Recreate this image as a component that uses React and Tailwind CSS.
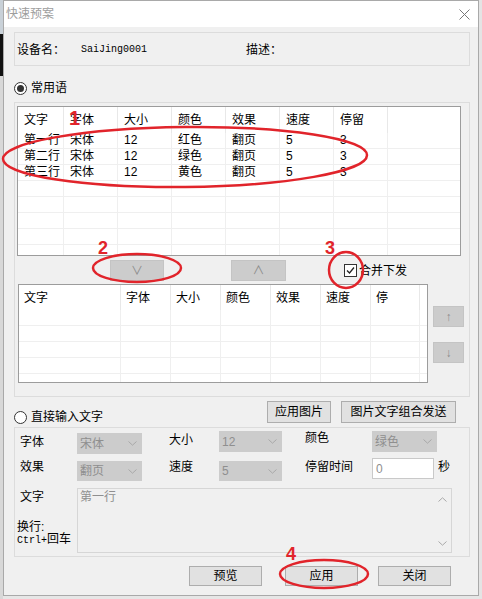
import React from 'react';

const SANS = "font-['Liberation_Sans','Noto_Sans_CJK_SC',sans-serif]";

const COLS1 = ['w-[46px]', 'w-[54px]', 'w-[54px]', 'w-[54px]', 'w-[54px]', 'w-[54px]', 'w-[54px]'];
const COLS2 = ['w-[102px]', 'w-[50px]', 'w-[50px]', 'w-[50px]', 'w-[50px]', 'w-[50px]', 'w-[49px]'];
const HEAD1 = ['文字', '字体', '大小', '颜色', '效果', '速度', '停留'];
const HEAD2 = ['文字', '字体', '大小', '颜色', '效果', '速度', '停'];
const ROWS1 = [
  ['第一行', '宋体', '12', '红色', '翻页', '5', '3'],
  ['第二行', '宋体', '12', '绿色', '翻页', '5', '3'],
  ['第三行', '宋体', '12', '黄色', '翻页', '5', '3'],
];

function ListView({ cols, head, rows, rowCount, headH, pad, className }) {
  return (
    <div className={`border border-[#9c9c9c] bg-white overflow-hidden text-[12px] text-black ${className}`}>
      <div className={`flex ${headH}`}>
        {cols.map((w, i) => (
          <div key={i} className={`${w} ${pad} shrink-0 flex items-center border-r border-[#e8e8e8]`}>
            {head[i]}
          </div>
        ))}
      </div>
      {Array.from({ length: rowCount }).map((_, r) => (
        <div key={r} className="flex h-[16px] shrink-0 border-b border-[#efefef]">
          {cols.map((w, i) => (
            <div key={i} className={`${w} ${pad} shrink-0 leading-[15px] border-r border-[#efefef]`}>
              {rows[r] ? rows[r][i] : ''}
            </div>
          ))}
          <div className="flex-1" />
        </div>
      ))}
    </div>
  );
}

function Radio({ checked }) {
  return (
    <span className="w-[13px] h-[13px] rounded-full border border-[#333] bg-white flex items-center justify-center shrink-0">
      {checked && <span className="w-[7px] h-[7px] rounded-full bg-[#333]" />}
    </span>
  );
}

function Btn({ children, className }) {
  return (
    <div className={`flex items-center justify-center bg-[#e1e1e1] border border-[#adadad] text-[12px] leading-none text-black shrink-0 ${className}`}>
      {children}
    </div>
  );
}

function GrayBtn({ children, className }) {
  return (
    <div className={`flex items-center justify-center bg-[#cccccc] border border-[#c4c4c4] text-[12px] leading-none text-[#8a8a8a] shrink-0 ${className}`}>
      {children}
    </div>
  );
}

function Chevron({ up }) {
  return (
    <svg width="9" height="5" viewBox="0 0 9 5">
      <path d={up ? 'M0.5 4.5 L4.5 0.8 L8.5 4.5' : 'M0.5 0.5 L4.5 4.2 L8.5 0.5'} fill="none" stroke="#a9a9a9" strokeWidth="1" />
    </svg>
  );
}

function Combo({ value, className }) {
  return (
    <div className={`flex items-center justify-between bg-[#cccccc] pl-[3px] pr-[5px] text-[12px] text-[#8f8f8f] shrink-0 ${className}`}>
      <span className="leading-[14px]">{value}</span>
      <Chevron />
    </div>
  );
}

export default function App() {
  return (
    <div className={`relative w-[482px] h-[599px] bg-[#e6e6e6] flex overflow-hidden ${SANS}`}>
      {/* background window edge */}
      <div className="w-[3px] flex flex-col shrink-0">
        <div className="h-[34px] bg-[#c9d1d8]" />
        <div className="h-[42px] bg-[#111]" />
        <div className="flex-1 bg-[#d8d8d8]" />
      </div>

      {/* dialog */}
      <div className="w-[476px] h-[596px] border border-[#a9a9a9] flex flex-col shrink-0">
        <div className="h-[26px] bg-white flex items-center justify-between pl-[2px] pr-[8px]">
          <span className="text-[12px] text-[#9d9d9d] leading-none">快速预案</span>
          <svg width="11" height="11" viewBox="0 0 11 11">
            <path d="M0.5 0.5 L10.5 10.5 M10.5 0.5 L0.5 10.5" stroke="#777" strokeWidth="1" />
          </svg>
        </div>

        <div className="flex-1 bg-[#f0f0f0] pl-[10px] flex flex-col text-[12px] text-black">
          {/* device */}
          <div className="mt-[5px] w-[456px] h-[34px] border border-[#dcdcdc] flex items-center pl-[2px] pt-[2px] leading-[14px]">
            <span className="w-[64px]">设备名：</span>
            <span className="w-[165px] font-['Liberation_Mono',monospace] text-[10px]">SaiJing0001</span>
            <span>描述：</span>
          </div>

          <div className="mt-[15px] h-[14px] flex items-center gap-[4px]">
            <Radio checked />
            <span className="leading-[14px]">常用语</span>
          </div>

          {/* common phrases group */}
          <div className="mt-[7px] w-[456px] h-[295px] border border-[#dcdcdc] flex flex-col pt-[3px] pl-[2px]">
            <ListView
              cols={COLS1}
              head={HEAD1}
              rows={ROWS1}
              rowCount={8}
              headH="h-[26px]"
              pad="pl-[6px]"
              className="w-[444px] h-[150px] shrink-0"
            />
            <div className="mt-[4px] h-[21px] flex items-center">
              <GrayBtn className="ml-[93px] w-[54px] h-[21px]">∨</GrayBtn>
              <GrayBtn className="ml-[67px] w-[55px] h-[21px]">∧</GrayBtn>
              <span className="ml-[58px] w-[13px] h-[13px] border border-[#333] bg-white flex items-center justify-center">
                <svg width="9" height="9" viewBox="0 0 9 9">
                  <path d="M1 4.5 L3.5 7 L8 1.5" fill="none" stroke="#222" strokeWidth="1.3" />
                </svg>
              </span>
              <span className="ml-[2px] leading-[14px]">合并下发</span>
            </div>
            <div className="mt-[3px] flex">
              <ListView
                cols={COLS2}
                head={HEAD2}
                rows={[]}
                rowCount={5}
                headH="h-[25px]"
                pad="pl-[5px]"
                className="ml-[1px] w-[410px] h-[99px] shrink-0"
              />
              <div className="ml-[5px] flex flex-col">
                <GrayBtn className="mt-[22px] w-[31px] h-[21px]">↑</GrayBtn>
                <GrayBtn className="mt-[15px] w-[31px] h-[21px]">↓</GrayBtn>
              </div>
            </div>
          </div>

          {/* direct input row */}
          <div className="mt-[4px] h-[22px] flex items-start">
            <div className="mt-[9px] flex items-center gap-[4px]">
              <Radio />
              <span className="leading-[14px]">直接输入文字</span>
            </div>
            <Btn className="ml-[164px] w-[64px] h-[22px]">应用图片</Btn>
            <Btn className="ml-[10px] w-[115px] h-[22px]">图片文字组合发送</Btn>
          </div>

          {/* direct input group */}
          <div className="mt-[4px] w-[456px] h-[130px] border border-[#dcdcdc] flex flex-col pt-[3px]">
            <div className="h-[24px] flex items-start pl-[5px] leading-[14px]">
              <span className="mt-[4px] w-[57px] shrink-0">字体</span>
              <Combo value="宋体" className="mt-[2px] w-[65px] h-[21px]" />
              <span className="mt-[2px] ml-[27px] w-[50px] shrink-0">大小</span>
              <Combo value="12" className="w-[63px] h-[21px]" />
              <span className="ml-[23px] w-[67px] shrink-0">颜色</span>
              <Combo value="绿色" className="w-[65px] h-[21px]" />
            </div>
            <div className="mt-[3px] h-[23px] flex items-start pl-[5px] leading-[14px]">
              <span className="mt-[2px] w-[57px] shrink-0">效果</span>
              <Combo value="翻页" className="mt-[3px] w-[65px] h-[20px]" />
              <span className="mt-[2px] ml-[27px] w-[50px] shrink-0">速度</span>
              <Combo value="5" className="mt-[3px] w-[63px] h-[20px]" />
              <span className="mt-[2px] ml-[23px] w-[67px] shrink-0">停留时间</span>
              <div className="w-[62px] h-[21px] bg-white border border-[#c9c9c9] pl-[3px] flex items-center text-[#8f8f8f] shrink-0">0</div>
              <span className="mt-[2px] ml-[4px]">秒</span>
            </div>
            <div className="mt-[7px] flex pl-[2px]">
              <div className="w-[60px] flex flex-col shrink-0">
                <span className="mt-[2px] ml-[3px] leading-[14px]">文字</span>
                <span className="mt-[17px] leading-[12px]">换行:</span>
                <span className="leading-[12px] font-['Liberation_Mono',monospace] text-[10px]">
                  Ctrl+<span className={`text-[12px] ${SANS}`}>回车</span>
                </span>
              </div>
              <div className="w-[375px] h-[65px] border border-[#d6d6d6] bg-[#f0f0f0] flex">
                <span className="flex-1 pl-[2px] pt-[1px] leading-[14px] text-[#8f8f8f]">第一行</span>
                <div className="w-[17px] flex flex-col items-center justify-between pt-[8px] pb-[6px]">
                  <Chevron up />
                  <Chevron />
                </div>
              </div>
            </div>
          </div>

          {/* bottom buttons */}
          <div className="mt-[9px] flex">
            <Btn className="ml-[175px] w-[73px] h-[20px]">预览</Btn>
            <Btn className="ml-[23px] w-[73px] h-[20px]">应用</Btn>
            <Btn className="ml-[20px] w-[73px] h-[20px]">关闭</Btn>
          </div>
        </div>
      </div>

      <div className="flex-1 bg-[#e4e4e4]" />

      {/* red annotations */}
      <svg className="absolute inset-0 pointer-events-none" width="482" height="599" viewBox="0 0 482 599">
        <g fill="none" stroke="#e1242b" strokeWidth="2.5">
          <ellipse cx="185" cy="157" rx="182" ry="30" transform="rotate(-0.6 185 157)" />
          <ellipse cx="137" cy="268" rx="44" ry="14" />
          <ellipse cx="346" cy="270" rx="17" ry="18" />
          <ellipse cx="324" cy="574" rx="44" ry="14" />
        </g>
      </svg>
      <span className="absolute left-[69px] top-[108px] text-[20px] leading-[20px] font-bold text-[#e1242b] font-['Liberation_Sans',sans-serif]">1</span>
      <span className="absolute left-[98px] top-[239px] text-[18px] leading-[18px] font-bold text-[#e1242b] font-['Liberation_Sans',sans-serif]">2</span>
      <span className="absolute left-[325px] top-[239px] text-[18px] leading-[18px] font-bold text-[#e1242b] font-['Liberation_Sans',sans-serif]">3</span>
      <span className="absolute left-[286px] top-[545px] text-[18px] leading-[18px] font-bold text-[#e1242b] font-['Liberation_Sans',sans-serif]">4</span>
    </div>
  );
}
